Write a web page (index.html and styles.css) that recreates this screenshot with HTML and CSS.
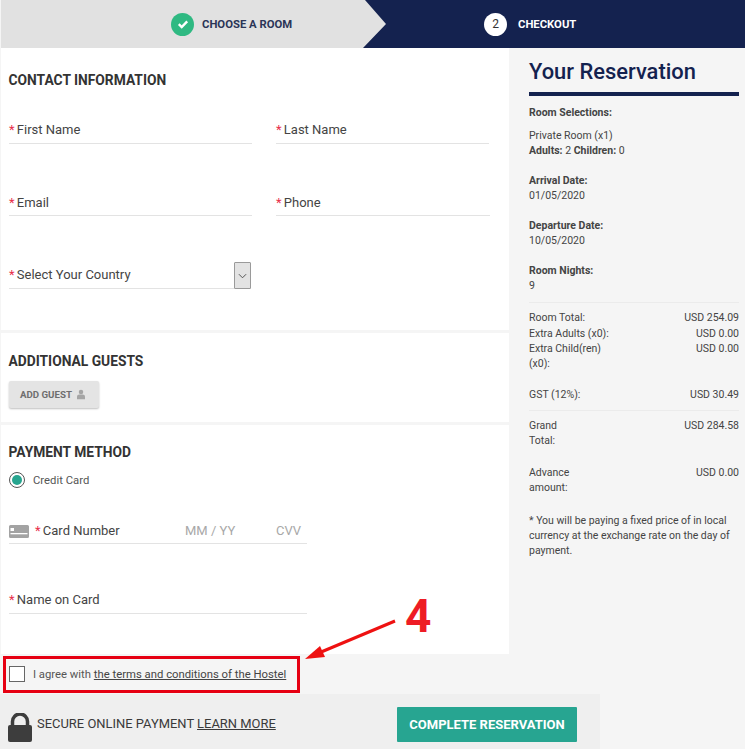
FILE: index.html
```html
<!DOCTYPE html>
<html lang="en">
<head>
<meta charset="utf-8">
<title>Checkout</title>
<link rel="stylesheet" href="styles.css">
</head>
<body>
<div class="page">
  <header class="steps">
    <div class="step step-done">
      <span class="step-check">
        <svg viewBox="0 0 12 12" width="12" height="12"><path d="M1.800 6.200 4.700 9 10.200 3.400" fill="none" stroke="#fff" stroke-width="2.400"/></svg>
      </span>
      <span class="step-label">CHOOSE A ROOM</span>
    </div>
    <svg class="step-arrow" viewBox="0 0 24 48" width="24" height="48" preserveAspectRatio="none"><path d="M2 0H24V48H0L23 24Z" fill="#14224f"/></svg>
    <div class="step step-current">
      <span class="step-num">2</span>
      <span class="step-label">CHECKOUT</span>
    </div>
  </header>

  <div class="columns">
    <main class="form-col">
      <section class="card card-contact">
        <h2 class="heading">CONTACT INFORMATION</h2>
        <div class="row row-names">
          <div class="field field-first"><span class="req">*</span> First Name</div>
          <div class="field field-last"><span class="req">*</span> Last Name</div>
        </div>
        <div class="row row-contact">
          <div class="field field-first"><span class="req">*</span> Email</div>
          <div class="field field-phone"><span class="req">*</span> Phone</div>
        </div>
        <div class="field field-country">
          <span><span class="req">*</span> Select Your Country</span>
          <span class="select-btn">
            <svg viewBox="0 0 10 6" width="9" height="6"><path d="M1 1 5 5 9 1" fill="none" stroke="#444" stroke-width="1"/></svg>
          </span>
        </div>
      </section>

      <section class="card card-guests">
        <h2 class="heading">ADDITIONAL GUESTS</h2>
        <button class="add-guest" type="button">ADD GUEST
          <svg viewBox="0 0 10 12" width="8" height="11"><circle cx="5" cy="3" r="2.800" fill="#a5a5a5"/><path d="M0 12V8.600C0 7 1.400 6 3 6H7C8.600 6 10 7 10 8.600V12Z" fill="#a5a5a5"/></svg>
        </button>
      </section>

      <section class="card card-payment">
        <h2 class="heading">PAYMENT METHOD</h2>
        <div class="radio-row"><span class="radio"><span class="radio-dot"></span></span><span class="radio-label">Credit Card</span></div>
        <div class="field field-card">
          <svg class="card-icon" viewBox="0 0 20 13" width="20" height="13"><path d="M0 1.500A1.500 1.500 0 0 1 1.500 0H18.500A1.500 1.500 0 0 1 20 1.500V11.500A1.500 1.500 0 0 1 18.500 13H1.500A1.500 1.500 0 0 1 0 11.500Z" fill="#a3a3a3"/><rect x="1.500" y="3" width="3.500" height="3" fill="#fff"/><rect x="1.500" y="8" width="17" height="1.300" fill="#fff"/></svg>
          <span class="card-name"><span class="req">*</span> Card Number</span>
          <span class="hint hint-date">MM / YY</span>
          <span class="hint">CVV</span>
        </div>
        <div class="field field-cardname"><span class="req">*</span> Name on Card</div>
      </section>

      <label class="terms">
        <span class="checkbox"></span>
        <span>I agree with <a class="terms-link" href="#">the terms and conditions of the Hostel</a></span>
      </label>
    </main>

    <aside class="summary">
      <h1 class="summary-title">Your Reservation</h1>
      <p class="s-block s-first"><b>Room Selections:</b></p>
      <p class="s-block s-room">Private Room (x1)<br><b>Adults:</b> 2 <b>Children:</b> 0</p>
      <p class="s-block"><b>Arrival Date:</b><br>01/05/2020</p>
      <p class="s-block"><b>Departure Date:</b><br>10/05/2020</p>
      <p class="s-block"><b>Room Nights:</b><br>9</p>
      <div class="rule"></div>
      <div class="line line-first"><span>Room Total:</span><span>USD 254.09</span></div>
      <div class="line"><span>Extra Adults (x0):</span><span>USD 0.00</span></div>
      <div class="line line-child"><span class="wrap-label">Extra Child(ren) (x0):</span><span>USD 0.00</span></div>
      <div class="line line-gst"><span>GST (12%):</span><span>USD 30.49</span></div>
      <div class="rule"></div>
      <div class="line line-gap"><span class="narrow-label">Grand Total:</span><span>USD 284.58</span></div>
      <div class="line line-gap"><span class="narrow-label">Advance amount:</span><span>USD 0.00</span></div>
      <p class="note">* You will be paying a fixed price of in local currency at the exchange rate on the day of payment.</p>
    </aside>
  </div>

  <footer class="paybar">
    <svg class="lock" viewBox="0 0 24 29" width="24" height="29"><path d="M4.500 13V8.500a7.500 7.500 0 0 1 15 0V13" fill="none" stroke="#3d3d3d" stroke-width="3.500"/><rect y="12" width="24" height="17" rx="2" fill="#3d3d3d"/></svg>
    <span class="secure">SECURE ONLINE PAYMENT <a class="learn" href="#">LEARN MORE</a></span>
    <button class="complete" type="button">COMPLETE RESERVATION</button>
  </footer>

  <div class="callout">
    <span class="callout-num">4</span>
    <svg class="callout-arrow" viewBox="0 0 100 45" width="100" height="45"><path d="M93 3 12 37" stroke="#ee1111" stroke-width="3" fill="none"/><path d="M3 41 18 28 23 39Z" fill="#ee1111"/></svg>
    <div class="callout-box"></div>
  </div>
</div>
</body>
</html>
```
FILE: styles.css
```css
* { box-sizing: border-box; }
html, body { margin: 0; padding: 0; }
body {
  background: #f5f5f5;
  font-family: Roboto, "Liberation Sans", sans-serif;
  color: #3a3a3a;
  font-size: 14px;
}
.page { position: relative; width: 745px; height: 749px; overflow: hidden; }

.steps { display: flex; height: 48px; margin-left: 1px; }
.step { display: flex; align-items: center; height: 48px; }
.step-done { width: 362px; background: #e1e1e1; padding-left: 170px; }
.step-arrow { display: block; flex: none; background: #e1e1e1; }
.step-current { flex: 1; background: #14224f; padding-left: 97px; }
.step-check {
  width: 23px; height: 23px; border-radius: 50%;
  background: #2fb982;
  display: flex; align-items: center; justify-content: center;
  margin-right: 8px;
}
.step-num {
  width: 23px; height: 23px; border-radius: 50%;
  background: #fff; color: #333;
  display: flex; align-items: center; justify-content: center;
  font-size: 12px; margin-right: 11px;
}
.step-label { font-size: 11.300px; font-weight: 700; }
.step-done .step-label { color: #2b3557; }
.step-current .step-label { color: #fff; }

.columns { display: flex; height: 646px; }
.form-col { width: 510px; }
.card { background: #fff; margin-left: 1px; padding-left: 8px; width: 508px; }
.heading { margin: 0 0 0 -0.500px; font-size: 13.800px; line-height: 16px; font-weight: 700; color: #333; }

.card-contact { height: 282px; padding-top: 24px; margin-bottom: 3px; }
.row { display: flex; }
.field { font-size: 13px; line-height: 16px; color: #444; border-bottom: 1px solid #e3e3e3; padding-top: 1px; }
.req { color: #e8304a; margin-right: -1px; }
.row-names { margin-top: 33px; gap: 24px; }
.row-names .field { height: 23px; }
.row-contact { margin-top: 50px; gap: 24px; }
.row-contact .field { height: 22px; }
.field-first { width: 243px; }
.field-last { width: 213px; }
.field-phone { width: 214px; }
.field-country {
  width: 242px; height: 27px; margin-top: 46px;
  display: flex; justify-content: space-between; align-items: flex-start;
  padding-top: 5px;
}
.select-btn {
  width: 17px; height: 27px; margin-top: -5px;
  background: #e3e3e3; border: 1px solid #9a9a9a; border-radius: 1px;
  display: flex; align-items: center; justify-content: center;
}

.card-guests { height: 89px; padding-top: 20px; margin-bottom: 3px; }
.add-guest {
  display: flex; align-items: center; gap: 5px;
  width: 90px; height: 27px; margin-top: 12px; padding: 0 0 0 11px;
  border: 0; border-radius: 2px;
  background: #e4e4e4; box-shadow: 0 1px 2px rgba(0,0,0,.25);
  color: #6e6e6e; font: 700 9.700px Roboto, sans-serif;
}

.card-payment { height: 229px; padding-top: 19px; }
.radio-row { display: flex; align-items: center; gap: 8px; margin-top: 11px; font-size: 11.300px; color: #555; line-height: 16px; }
.radio-label { padding-top: 2px; }
.radio {
  width: 16px; height: 16px; border-radius: 50%; border: 1px solid #555;
  display: flex; align-items: center; justify-content: center; background: #fff;
}
.radio-dot { width: 10px; height: 10px; border-radius: 50%; background: #27a58f; }
.field-card { display: flex; align-items: center; width: 298px; height: 25px; margin-top: 30px; padding: 0; }
.card-icon { flex: none; margin-right: 6px; }
.card-name { width: 150px; }
.hint { color: #a8a8a8; }
.hint-date { width: 91px; }
.field-cardname { width: 298px; height: 23px; margin-top: 47px; }

.terms { display: flex; align-items: center; gap: 8px; height: 40px; padding-left: 9px; font-size: 11.300px; color: #555; }
.checkbox { width: 16px; height: 16px; border: 1px solid #666; background: #fff; flex: none; }
.terms-link { color: #444; }

.summary { flex: 1; padding: 11px 6px 0 19px; font-size: 10.500px; line-height: 15px; color: #444; }
.summary-title { margin: 0; font-size: 21.900px; line-height: 26px; font-weight: 500; color: #14224f; padding-bottom: 7px; border-bottom: 4px solid #14224f; }
.s-block { margin: 0 0 15px; }
.s-first { margin-top: 9px; margin-bottom: 8px; }
.rule { height: 1px; background: #ebebeb; margin: -6px 0 7px; }
.line { display: flex; justify-content: space-between; }
.line-first { margin-bottom: 1px; }
.line-child { margin-bottom: 16px; }
.line-gap { margin-bottom: 17px; }
.wrap-label { width: 90px; }
.narrow-label { width: 50px; }
.line-gst { margin-bottom: 14px; }
.note { margin: 18px 0 0; }

.paybar {
  display: flex; align-items: center;
  width: 600px; height: 55px; padding: 0 23px 0 8px;
  background: #efefef;
}
.lock { flex: none; margin-right: 5px; margin-top: 12px; }
.secure { font-size: 12.950px; color: #3a3a3a; margin-top: 4px; }
.learn { color: #3a3a3a; }
.complete {
  margin-left: auto; margin-top: 6px; width: 180px; height: 35px; border: 0; border-radius: 1px;
  background: #27a591; color: #fff;
  font: 700 13px Roboto, sans-serif;
}

.callout { position: absolute; left: 0; top: 0; width: 0; height: 0; }
.callout-num { position: absolute; left: 405px; top: 589px; font: 700 46px/54px Roboto, sans-serif; color: #ee1c25; }
.callout-arrow { position: absolute; left: 302px; top: 618px; }
.callout-box { position: absolute; left: 3px; top: 656px; width: 297px; height: 37px; border: 3px solid #e60012; }
```
